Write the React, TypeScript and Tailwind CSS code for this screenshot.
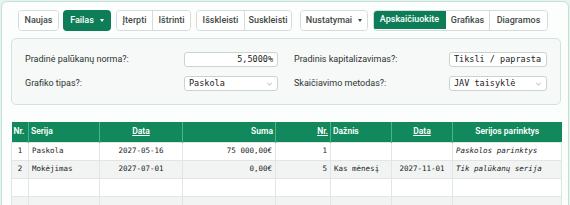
import React from "react";

const sans = { fontFamily: "Roboto, 'Noto Sans', sans-serif" };

function Btn({
  children,
  green = false,
  caret = false,
  className = "",
}: {
  children: React.ReactNode;
  green?: boolean;
  caret?: boolean;
  className?: string;
}) {
  return (
    <button
      type="button"
      className={
        "flex h-full items-center justify-center gap-[6px] text-[9px] font-medium " +
        (green ? "bg-[#0d7d57] text-white " : "bg-white text-[#3f4a45] ") +
        className
      }
    >
      {children}
      {caret && (
        <span className="block h-0 w-0 border-x-[2.5px] border-t-[3px] border-x-transparent border-t-current" />
      )}
    </button>
  );
}

function Select({ value, width }: { value: string; width: string }) {
  return (
    <div
      className={
        "relative flex h-[15px] items-center overflow-hidden rounded-[3px] border border-[#c9d4cf] bg-white pl-[4px] font-['DejaVu_Sans_Mono',monospace] text-[8.5px] text-[#222] " +
        width
      }
    >
      <span className="whitespace-nowrap">{value}</span>
      <svg
        viewBox="0 0 10 10"
        className="absolute right-[4px] top-[4px] h-[6px] w-[7px] text-[#777]"
      >
        <path d="M1.5 3.5 L5 6.5 L8.5 3.5" fill="none" stroke="currentColor" strokeWidth="1" />
      </svg>
    </div>
  );
}

const rows = [
  ["1", "Paskola", "2027-05-16", "75 000,00€", "1", "", "", "Paskolos parinktys"],
  ["2", "Mokėjimas", "2027-07-01", "0,00€", "5", "Kas mėnesį", "2027-11-01", "Tik palūkanų serija"],
  ["", "", "", "", "", "", "", ""],
  ["", "", "", "", "", "", "", ""],
];

const cellAlign = [
  "text-center",
  "text-left",
  "text-center",
  "text-right",
  "text-right",
  "text-left",
  "text-center",
  "text-left italic",
];

export default function App() {
  return (
    <div className="h-[205px] w-[570px] overflow-hidden bg-[#e7f3ee] p-px" style={sans}>
      <div className="h-[230px] rounded-[6px] border border-[#c3e1d4] bg-[#fcfdfd] px-[9px] pt-[8px]">
        <div className="flex h-[21px] items-stretch pl-[7px]">
          <div className="flex overflow-hidden rounded-[4px] border border-[#d3dcd8]">
            <Btn className="w-[39px]">Naujas</Btn>
          </div>
          <div className="ml-[4px] flex overflow-hidden rounded-[4px]">
            <Btn green caret className="w-[48px]">
              Failas
            </Btn>
          </div>
          <div className="ml-[5px] flex overflow-hidden rounded-[4px] border border-[#d3dcd8]">
            <Btn className="w-[36px] border-r border-[#d3dcd8]">Įterpti</Btn>
            <Btn className="w-[37px]">Ištrinti</Btn>
          </div>
          <div className="ml-[5px] flex overflow-hidden rounded-[4px] border border-[#d3dcd8]">
            <Btn className="w-[48px] border-r border-[#d3dcd8]">Išskleisti</Btn>
            <Btn className="w-[46px]">Suskleisti</Btn>
          </div>
          <div className="ml-[8px] flex overflow-hidden rounded-[4px] border border-[#d3dcd8]">
            <Btn caret className="w-[66px]">
              Nustatymai
            </Btn>
          </div>
          <div className="ml-[5px] flex overflow-hidden rounded-[4px] border border-[#d3dcd8]">
            <Btn green className="-my-px -ml-px w-[73px]">Apskaičiuokite</Btn>
            <Btn className="w-[44px] border-r border-[#d3dcd8]">Grafikas</Btn>
            <Btn className="w-[57px]">Diagramos</Btn>
          </div>
        </div>

        <div className="mt-[7px] grid w-[550px] grid-cols-2 gap-x-[16px] gap-y-[9px] rounded-[5px] border border-[#cfe5db] bg-[#f7f9f8] px-[13px] pb-[13px] pt-[13px] text-[9px] text-[#2c3531]">
          <div className="flex items-center justify-between">
            <span>Pradinė palūkanų norma?:</span>
            <div className="flex h-[15px] w-[94px] items-center justify-end rounded-[3px] border border-[#c9d4cf] bg-white pr-[4px] font-['DejaVu_Sans_Mono',monospace] text-[8.5px] text-[#222]">
              5,5000%
            </div>
          </div>
          <div className="flex items-center justify-between">
            <span>Pradinis kapitalizavimas?:</span>
            <Select value="Tiksli / paprasta" width="w-[98px]" />
          </div>
          <div className="flex items-center justify-between">
            <span>Grafiko tipas?:</span>
            <Select value="Paskola" width="w-[94px]" />
          </div>
          <div className="flex items-center justify-between">
            <span>Skaičiavimo metodas?:</span>
            <Select value="JAV taisyklė" width="w-[98px]" />
          </div>
        </div>

        <table className="mt-[17px] w-[550px] table-fixed border-collapse">
          <colgroup>
            <col className="w-[17px]" />
            <col className="w-[71px]" />
            <col className="w-[83px]" />
            <col className="w-[93px]" />
            <col className="w-[55px]" />
            <col className="w-[61px]" />
            <col className="w-[61px]" />
            <col className="w-[109px]" />
          </colgroup>
          <thead>
            <tr className="h-[20px] bg-[#11895c] text-[8.5px] text-white">
              <th className="border-r border-[#4fb08a] px-[2px] text-left font-semibold">Nr.</th>
              <th className="border-r border-[#4fb08a] px-[2px] text-left font-semibold">Serija</th>
              <th className="border-r border-[#4fb08a] px-[2px] text-center font-semibold underline">Data</th>
              <th className="border-r border-[#4fb08a] px-[2px] text-right font-semibold">Suma</th>
              <th className="border-r border-[#4fb08a] px-[2px] text-right font-semibold underline">Nr.</th>
              <th className="border-r border-[#4fb08a] px-[2px] text-left font-semibold">Dažnis</th>
              <th className="border-r border-[#4fb08a] px-[2px] text-center font-semibold underline">Data</th>
              <th className="px-[2px] text-center font-semibold">Serijos parinktys</th>
            </tr>
          </thead>
          <tbody className="font-['DejaVu_Sans_Mono',monospace] text-[7.5px] text-[#222]">
            {rows.map((r, i) => (
              <tr key={i} className={"h-[18px] " + (i % 2 === 1 ? "bg-[#f1f4f3]" : "bg-white")}>
                {r.map((c, j) => (
                  <td
                    key={j}
                    className={
                      "overflow-hidden whitespace-nowrap border border-[#dfe6e3] px-[3px] " +
                      cellAlign[j]
                    }
                  >
                    {c}
                  </td>
                ))}
              </tr>
            ))}
          </tbody>
        </table>
      </div>
    </div>
  );
}
